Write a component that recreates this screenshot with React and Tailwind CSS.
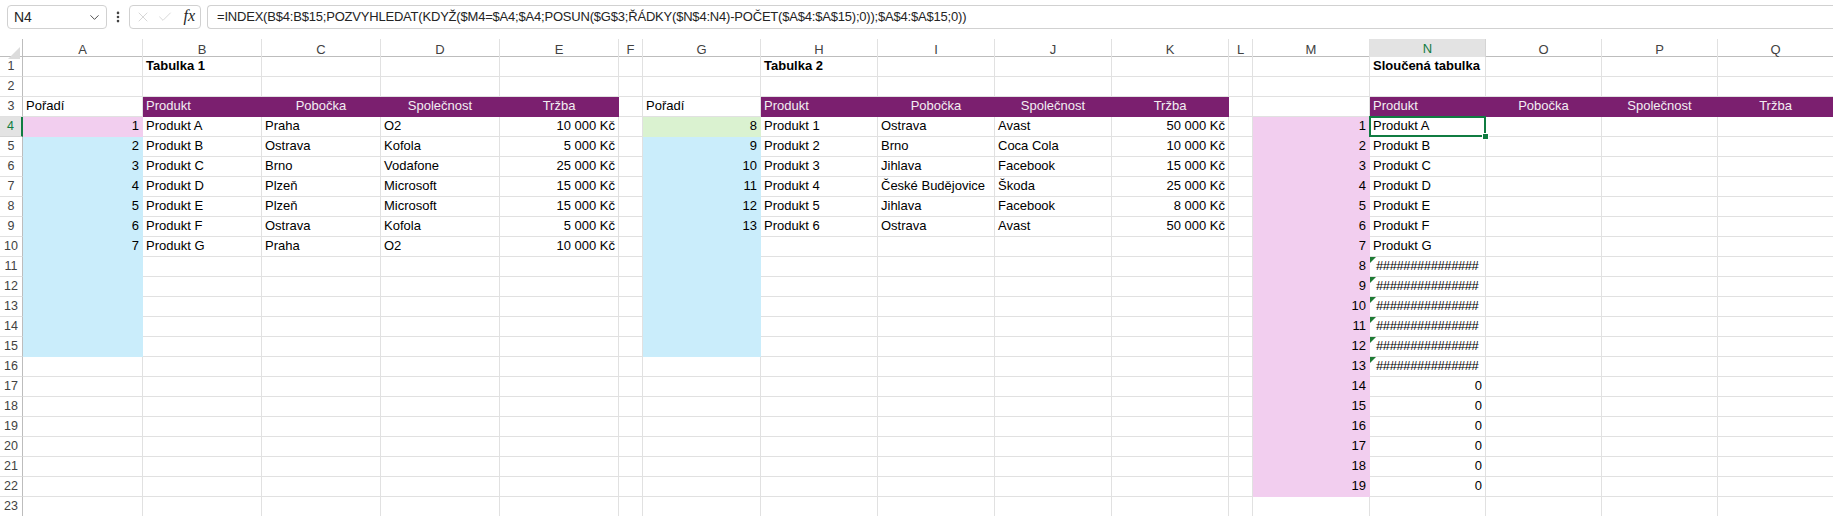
import React from 'react';
import { ChevronDown, EllipsisVertical, X, Check } from 'lucide-react';

const LETTERS = 'ABCDEFGHIJKLMNOPQ'.split('');
const GRID = 'grid grid-cols-[23px_120px_119px_119px_119px_119px_24px_118px_117px_117px_117px_117px_24px_117px_116px_116px_116px_116px]';

const FILLS = {
  none:   'bg-white border-[#e1e1e1]',
  purple: 'bg-[#7b1f6f] border-[#7b1f6f] text-[#f3eef3]',
  pink:   'bg-[#f2ceef] border-[#f2ceef]',
  blue:   'bg-[#caedfb] border-[#caedfb]',
  green:  'bg-[#daf2d0] border-[#daf2d0]',
};

const FORMULA = '=INDEX(B$4:B$15;POZVYHLEDAT(KDYŽ($M4=$A4;$A4;POSUN($G$3;ŘÁDKY($N$4:N4)-POČET($A$4:$A$15);0));$A$4:$A$15;0))';

const t1 = [
  ['Produkt A', 'Praha', 'O2', '10 000 Kč'],
  ['Produkt B', 'Ostrava', 'Kofola', '5 000 Kč'],
  ['Produkt C', 'Brno', 'Vodafone', '25 000 Kč'],
  ['Produkt D', 'Plzeň', 'Microsoft', '15 000 Kč'],
  ['Produkt E', 'Plzeň', 'Microsoft', '15 000 Kč'],
  ['Produkt F', 'Ostrava', 'Kofola', '5 000 Kč'],
  ['Produkt G', 'Praha', 'O2', '10 000 Kč'],
];

const t2 = [
  ['Produkt 1', 'Ostrava', 'Avast', '50 000 Kč'],
  ['Produkt 2', 'Brno', 'Coca Cola', '10 000 Kč'],
  ['Produkt 3', 'Jihlava', 'Facebook', '15 000 Kč'],
  ['Produkt 4', 'České Budějovice', 'Škoda', '25 000 Kč'],
  ['Produkt 5', 'Jihlava', 'Facebook', '8 000 Kč'],
  ['Produkt 6', 'Ostrava', 'Avast', '50 000 Kč'],
];

// builds the cell map: key "r-c" (row 1-based, col 0 = A)
function buildCells() {
  const m = {};
  const put = (r, c, v) => { m[`${r}-${c}`] = { ...(m[`${r}-${c}`] || {}), ...v }; };

  put(1, 1, { t: 'Tabulka 1', b: true });
  put(1, 7, { t: 'Tabulka 2', b: true });
  put(1, 13, { t: 'Sloučená tabulka', b: true });

  put(3, 0, { t: 'Pořadí' });
  put(3, 6, { t: 'Pořadí' });
  [1, 7, 13].forEach((s) => {
    put(3, s, { t: 'Produkt', fill: 'purple' });
    put(3, s + 1, { t: 'Pobočka', al: 'c', fill: 'purple' });
    put(3, s + 2, { t: 'Společnost', al: 'c', fill: 'purple' });
    put(3, s + 3, { t: 'Tržba', al: 'c', fill: 'purple' });
  });

  for (let r = 4; r <= 15; r++) {
    put(r, 0, { fill: r === 4 ? 'pink' : 'blue' });
    put(r, 6, { fill: r === 4 ? 'green' : 'blue' });
  }
  t1.forEach((row, i) => {
    const r = 4 + i;
    put(r, 0, { t: String(i + 1), al: 'r' });
    put(r, 1, { t: row[0] });
    put(r, 2, { t: row[1] });
    put(r, 3, { t: row[2] });
    put(r, 4, { t: row[3], al: 'r' });
  });
  t2.forEach((row, i) => {
    const r = 4 + i;
    put(r, 6, { t: String(8 + i), al: 'r' });
    put(r, 7, { t: row[0] });
    put(r, 8, { t: row[1] });
    put(r, 9, { t: row[2] });
    put(r, 10, { t: row[3], al: 'r' });
  });

  for (let r = 4; r <= 22; r++) {
    put(r, 12, { t: String(r - 3), al: 'r', fill: 'pink' });
    if (r <= 10) put(r, 13, { t: t1[r - 4][0] });
    else if (r <= 16) put(r, 13, { t: '###############', err: true });
    else put(r, 13, { t: '0', al: 'r' });
  }
  put(4, 13, { sel: true });
  return m;
}

const CELLS = buildCells();

function Cell({ c }) {
  const fill = FILLS[c?.fill || 'none'];
  const align = c?.al === 'r' ? 'justify-end' : c?.al === 'c' ? 'justify-center' : 'justify-start';
  return (
    <div className={`relative flex items-end h-[20px] border-r border-b px-[3px] pb-[1px] whitespace-nowrap overflow-visible ${fill} ${align} ${c?.b ? 'font-bold' : ''}`}>
      {c?.err && (
        <svg className="absolute left-0 top-0" width="6" height="6" viewBox="0 0 6 6">
          <path d="M0 0H6L0 6Z" fill="#1e7b34" />
        </svg>
      )}
      {c?.t && <span className={c?.err ? 'pl-[3px] tracking-[-0.4px]' : ''}>{c.t}</span>}
      {c?.sel && (
        <>
          <div className="absolute -left-[1px] -top-[1px] -right-[1px] -bottom-[1px] border-2 border-[#107c41] z-10" />
          <div className="absolute -right-[4px] -bottom-[4px] w-[7px] h-[7px] bg-[#107c41] border border-white z-20" />
        </>
      )}
    </div>
  );
}

function FormulaBar() {
  return (
    <div className="h-[39px] flex items-start pt-[5px] pl-[7px] bg-white">
      <div className="h-[24px] w-[100px] flex items-center justify-between border border-[#d1d1d1] rounded-[4px] pl-[6px] pr-[4px] text-[14px] text-[#242424]">
        <span>N4</span>
        <ChevronDown size={15} strokeWidth={1.5} className="text-[#424242]" />
      </div>
      <div className="w-[22px] h-[24px] flex items-center justify-center">
        <EllipsisVertical size={14} strokeWidth={2.5} className="text-[#424242]" />
      </div>
      <div className="h-[24px] w-[72px] flex items-center border border-[#d1d1d1] rounded-[4px] px-[5px] gap-[6px]">
        <X size={16} strokeWidth={1} className="text-[#c2c2c2]" />
        <Check size={16} strokeWidth={1} className="text-[#c2c2c2]" />
        <span className="ml-auto font-['Liberation_Serif'] italic text-[16px] text-[#242424] leading-none pb-[2px]">fx</span>
      </div>
      <div className="ml-[6px] h-[24px] flex-1 flex items-center border border-[#d1d1d1] border-r-0 rounded-l-[4px] pl-[9px] text-[13px] tracking-[-0.2px] text-[#242424] whitespace-nowrap overflow-hidden">
        {FORMULA}
      </div>
    </div>
  );
}

export default function App() {
  const rows = Array.from({ length: 23 }, (_, i) => i + 1);
  return (
    <div className="w-[1833px] h-[516px] overflow-hidden bg-white font-['Liberation_Sans',Arial,sans-serif] text-[13px] text-black">
      <FormulaBar />

      {/* column letters */}
      <div className={`${GRID} h-[18px] border-b border-[#bdbdbd]`}>
        <div className="relative border-r border-[#bdbdbd]">
          <svg className="absolute right-[2px] bottom-[2px]" width="12" height="12" viewBox="0 0 12 12">
            <path d="M12 0V12H0Z" fill="#dcdcdc" />
          </svg>
        </div>
        {LETTERS.map((l) =>
          l === 'N' ? (
            <div key={l} className="flex items-center justify-center bg-[#e3e3e3] border-r border-[#d4d4d4] border-b-2 border-b-[#107c41] text-[#107c41] text-[13px]">{l}</div>
          ) : (
            <div key={l} className="flex items-center justify-center border-r border-[#e1e1e1] text-[#424242] text-[13px]">{l}</div>
          )
        )}
      </div>

      {rows.map((r) => (
        <div key={r} className={GRID}>
          {r === 4 ? (
            <div className="h-[20px] flex items-center justify-center bg-[#e3e3e3] border-r-2 border-r-[#107c41] border-b border-b-[#d4d4d4] text-[#107c41] text-[12.5px]">{r}</div>
          ) : (
            <div className="h-[20px] flex items-center justify-center border-r border-r-[#bdbdbd] border-b border-b-[#e1e1e1] text-[#424242] text-[12.5px]">{r}</div>
          )}
          {LETTERS.map((_, c) => (
            <Cell key={c} c={CELLS[`${r}-${c}`]} />
          ))}
        </div>
      ))}
    </div>
  );
}
